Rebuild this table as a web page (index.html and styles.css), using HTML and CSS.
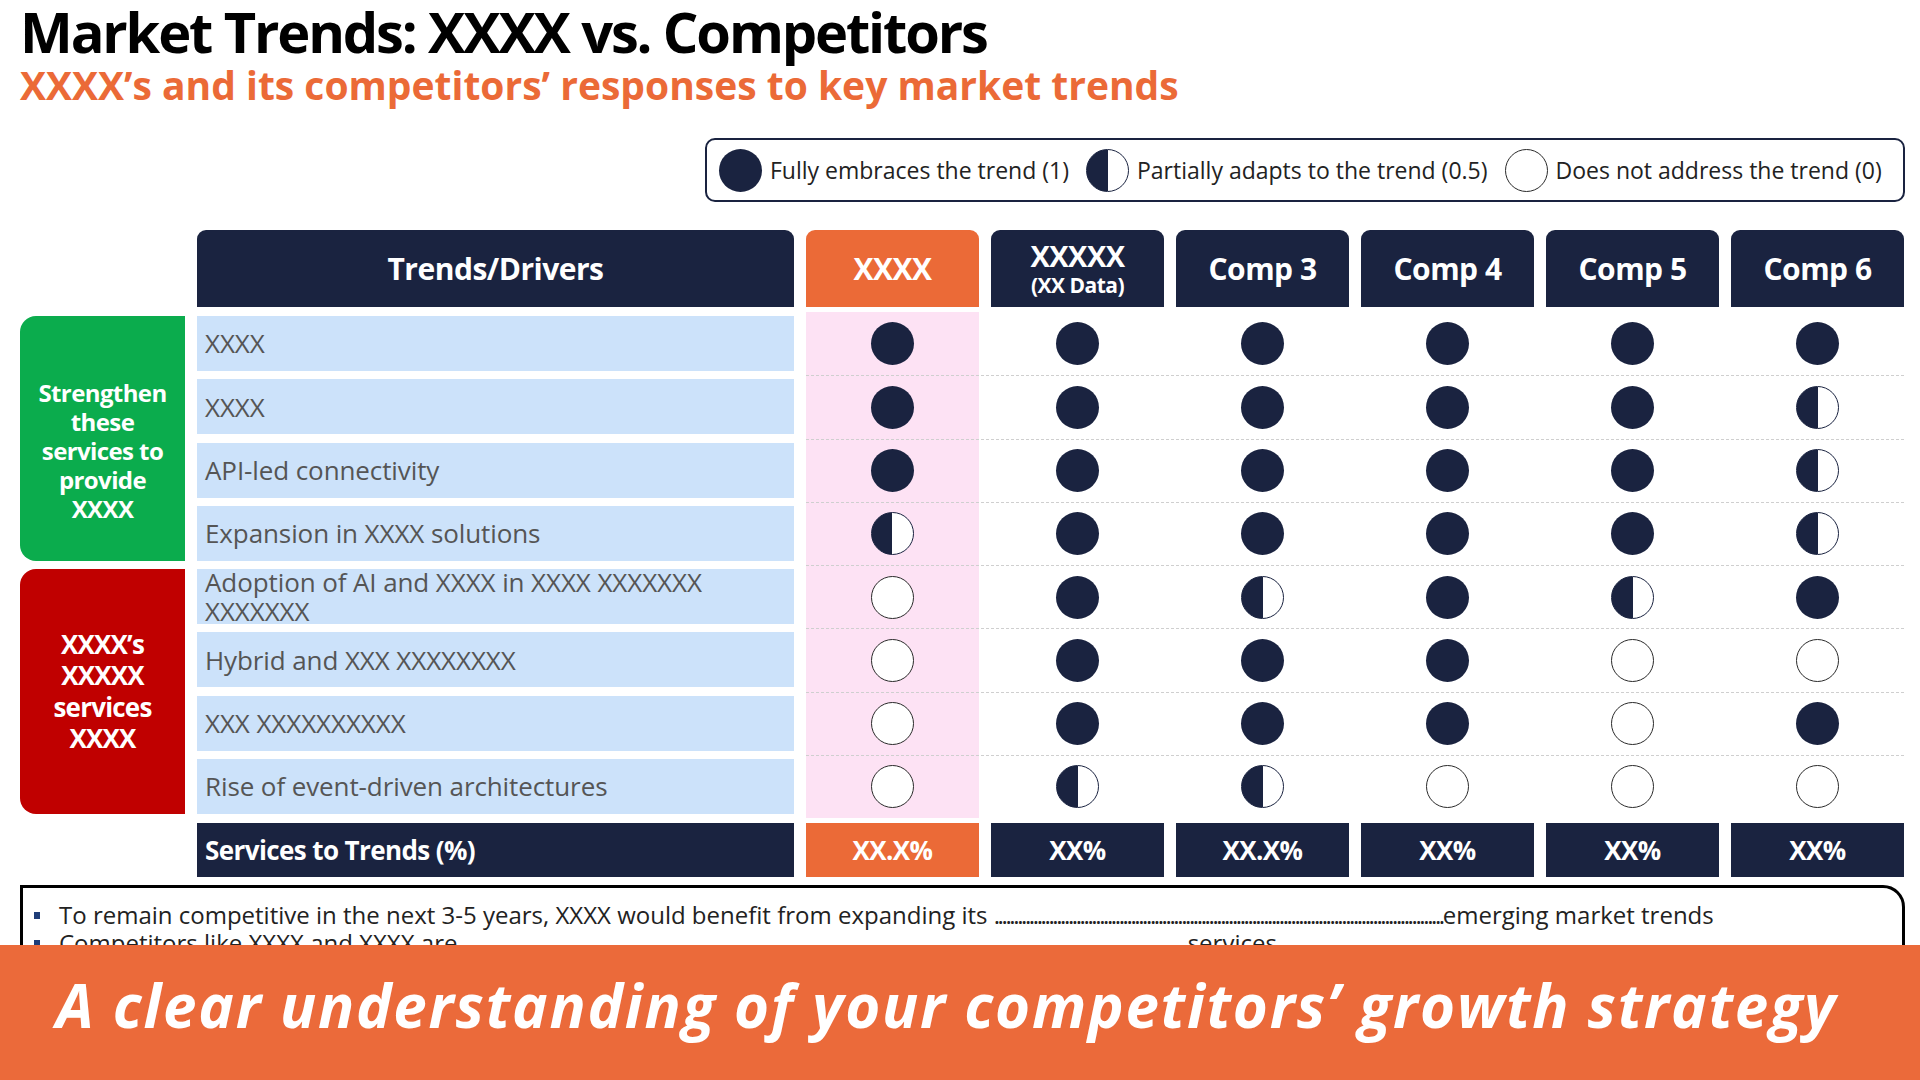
FILE: index.html
```html
<!DOCTYPE html>
<html lang="en">
<head>
<meta charset="utf-8">
<title>Market Trends: XXXX vs. Competitors</title>
<link rel="stylesheet" href="styles.css">
</head>
<body>
<div class="slide">
  <h1 class="title">Market Trends: XXXX vs. Competitors</h1>
  <h2 class="subtitle">XXXX’s and its competitors’ responses to key market trends</h2>

  <div class="legend-row">
    <div class="legend">
      <span class="dot full"></span><span class="legend-text">Fully embraces the trend (1)</span>
      <span class="dot half"></span><span class="legend-text">Partially adapts to the trend (0.5)</span>
      <span class="dot none"></span><span class="legend-text">Does not address the trend (0)</span>
    </div>
  </div>

  <div class="matrix">
    <div class="mrow head">
      <div class="spacer"></div>
      <div class="hcell">Trends/Drivers</div>
      <div class="hcell hl">XXXX</div>
      <div class="hcell two"><span>XXXXX</span><small>(XX Data)</small></div>
      <div class="hcell">Comp 3</div>
      <div class="hcell">Comp 4</div>
      <div class="hcell">Comp 5</div>
      <div class="hcell">Comp 6</div>
    </div>

    <div class="mbody">
      <div class="cats">
        <div class="cat green">Strengthen<br>these<br>services to<br>provide<br>XXXX</div>
        <div class="cat red">XXXX’s<br>XXXXX<br>services<br>XXXX</div>
      </div>
      <div class="trends">
        <div class="trend">XXXX</div>
        <div class="trend">XXXX</div>
        <div class="trend">API-led connectivity</div>
        <div class="trend">Expansion in XXXX solutions</div>
        <div class="trend">Adoption of AI and XXXX in XXXX XXXXXXX XXXXXXX</div>
        <div class="trend">Hybrid and XXX XXXXXXXX</div>
        <div class="trend">XXX XXXXXXXXXX</div>
        <div class="trend">Rise of event-driven architectures</div>
      </div>
      <div class="marks">
        <div class="mark-row"><span class="dot full"></span><span class="dot full"></span><span class="dot full"></span><span class="dot full"></span><span class="dot full"></span><span class="dot full"></span></div>
        <div class="mark-row"><span class="dot full"></span><span class="dot full"></span><span class="dot full"></span><span class="dot full"></span><span class="dot full"></span><span class="dot half"></span></div>
        <div class="mark-row"><span class="dot full"></span><span class="dot full"></span><span class="dot full"></span><span class="dot full"></span><span class="dot full"></span><span class="dot half"></span></div>
        <div class="mark-row"><span class="dot half"></span><span class="dot full"></span><span class="dot full"></span><span class="dot full"></span><span class="dot full"></span><span class="dot half"></span></div>
        <div class="mark-row"><span class="dot none"></span><span class="dot full"></span><span class="dot half"></span><span class="dot full"></span><span class="dot half"></span><span class="dot full"></span></div>
        <div class="mark-row"><span class="dot none"></span><span class="dot full"></span><span class="dot full"></span><span class="dot full"></span><span class="dot none"></span><span class="dot none"></span></div>
        <div class="mark-row"><span class="dot none"></span><span class="dot full"></span><span class="dot full"></span><span class="dot full"></span><span class="dot none"></span><span class="dot full"></span></div>
        <div class="mark-row"><span class="dot none"></span><span class="dot half"></span><span class="dot half"></span><span class="dot none"></span><span class="dot none"></span><span class="dot none"></span></div>
      </div>
    </div>

    <div class="mrow foot">
      <div class="spacer"></div>
      <div class="fcell label">Services to Trends (%)</div>
      <div class="fcell hl">XX.X%</div>
      <div class="fcell">XX%</div>
      <div class="fcell">XX.X%</div>
      <div class="fcell">XX%</div>
      <div class="fcell">XX%</div>
      <div class="fcell">XX%</div>
    </div>
  </div>

  <div class="notes">
    <ul>
      <li>To remain competitive in the next 3-5 years, XXXX would benefit from expanding its <span class="dots">...................................................................................................................</span>emerging market trends</li>
      <li>Competitors like XXXX and XXXX are <span class="gap"></span>services</li>
    </ul>
  </div>

  <div class="banner">A clear understanding of your competitors’ growth strategy</div>
</div>
</body>
</html>
```

FILE: styles.css
```css
* { box-sizing: border-box; }

html, body {
  margin: 0;
  padding: 0;
  background: #ffffff;
}

body {
  font-family: "Open Sans", "Liberation Sans", sans-serif;
  color: #222222;
}

.slide {
  position: relative;
  width: 1920px;
  height: 1080px;
  overflow: hidden;
  padding: 0 15px 0 20px;
}

.title {
  margin: 0;
  padding-top: 2px;
  font-size: 56px;
  line-height: 58px;
  font-weight: 700;
  letter-spacing: -2.15px;
  color: #000000;
}

.subtitle {
  margin: 4px 0 0;
  font-size: 39px;
  line-height: 42px;
  font-weight: 700;
  letter-spacing: 0;
  color: #eb6a37;
}

/* legend */
.legend-row {
  display: flex;
  justify-content: flex-end;
  margin-top: 32px;
}

.legend {
  display: flex;
  align-items: center;
  width: 1200px;
  height: 64px;
  padding: 0 12px;
  border: 2px solid #1a2340;
  border-radius: 10px;
}

.legend .dot { flex: none; }

.legend-text {
  font-size: 23px;
  color: #222222;
  margin: 0 17px 0 8px;
  white-space: nowrap;
}

/* dots */
.dot {
  display: block;
  width: 43px;
  height: 43px;
  border-radius: 50%;
}

.dot.full { background: #1a2340; }

.dot.half {
  background: linear-gradient(to right, #1a2340 50%, #ffffff 50%);
  border: 1.5px solid #1a2340;
}

.dot.none {
  background: #ffffff;
  border: 1.5px solid #2a2a2a;
}

/* matrix */
.matrix {
  margin-top: 28px;
}

.mrow {
  display: grid;
  grid-template-columns: 165px 597px repeat(6, 173px);
  column-gap: 12px;
}

.head { height: 77px; }

.hcell {
  background: #1a2340;
  color: #ffffff;
  border-radius: 9px 9px 0 0;
  display: flex;
  flex-direction: column;
  align-items: center;
  justify-content: center;
  font-size: 30px;
  font-weight: 700;
  letter-spacing: -0.5px;
}

.hcell.hl { background: #eb6a37; }

.hcell.two span { font-size: 29px; line-height: 32px; }
.hcell.two small { font-size: 21px; line-height: 26px; font-weight: 700; letter-spacing: -0.5px; }

.mbody {
  display: flex;
  gap: 12px;
  margin-top: 5px;
}

.cats {
  width: 165px;
  flex: none;
  display: flex;
  flex-direction: column;
  gap: 8px;
  padding: 4px 0;
}

.cat {
  height: 245px;
  border-radius: 16px 0 0 16px;
  color: #ffffff;
  font-weight: 700;
  text-align: center;
  display: flex;
  align-items: center;
  justify-content: center;
}

.cat.green {
  background: #0bac4d;
  font-size: 24px;
  line-height: 29px;
  letter-spacing: -0.6px;
  padding-top: 24px;
}

.cat.red {
  background: #c00000;
  font-size: 26px;
  line-height: 31.5px;
  letter-spacing: -0.8px;
}

.trends {
  width: 597px;
  flex: none;
  display: flex;
  flex-direction: column;
  gap: 8.3px;
  padding: 4px 0;
}

.trend {
  height: 55px;
  background: #cce2fa;
  color: #555555;
  font-size: 26px;
  line-height: 28.5px;
  padding: 0 8px;
  display: flex;
  align-items: center;
  letter-spacing: -0.1px;
}

.marks {
  width: 1098px;
  flex: none;
  background: linear-gradient(to right, #fde2f4 173px, transparent 173px);
}

.mark-row {
  height: 63.25px;
  display: grid;
  grid-template-columns: repeat(6, 173px);
  column-gap: 12px;
  align-items: center;
  justify-items: center;
}

.mark-row + .mark-row {
  border-top: 1.5px dashed #cfcfcf;
}

.foot {
  height: 54px;
  margin-top: 5px;
}

.fcell {
  background: #1a2340;
  color: #ffffff;
  font-size: 26px;
  font-weight: 700;
  letter-spacing: -0.6px;
  display: flex;
  align-items: center;
  justify-content: center;
}

.fcell.label {
  justify-content: flex-start;
  padding-left: 8px;
}

.fcell.hl { background: #eb6a37; }

/* notes */
.notes {
  margin-top: 8px;
  height: 140px;
  border: 3.5px solid #000000;
  border-top-right-radius: 22px;
  padding: 13px 0 0 0;
}

.notes ul {
  list-style: none;
  margin: 0;
  padding: 0;
}

.notes li {
  position: relative;
  font-size: 24px;
  line-height: 28px;
  padding-left: 36px;
  color: #222222;
  white-space: nowrap;
}

.notes li::before {
  content: "";
  position: absolute;
  left: 11px;
  top: 11px;
  width: 6px;
  height: 7px;
  background: #1f3d78;
}

.dots {
  letter-spacing: -2.4px;
}

.gap {
  display: inline-block;
  width: 724px;
}

/* banner */
.banner {
  position: absolute;
  left: 0;
  bottom: 0;
  width: 1920px;
  height: 135px;
  background: #eb6a3a;
  color: #ffffff;
  font-family: "Open Sans", "Lato", sans-serif;
  font-style: italic;
  font-weight: 700;
  font-size: 60px;
  letter-spacing: 1.75px;
  display: flex;
  align-items: center;
  padding: 0 0 16px 56px;
  white-space: nowrap;
}
```
